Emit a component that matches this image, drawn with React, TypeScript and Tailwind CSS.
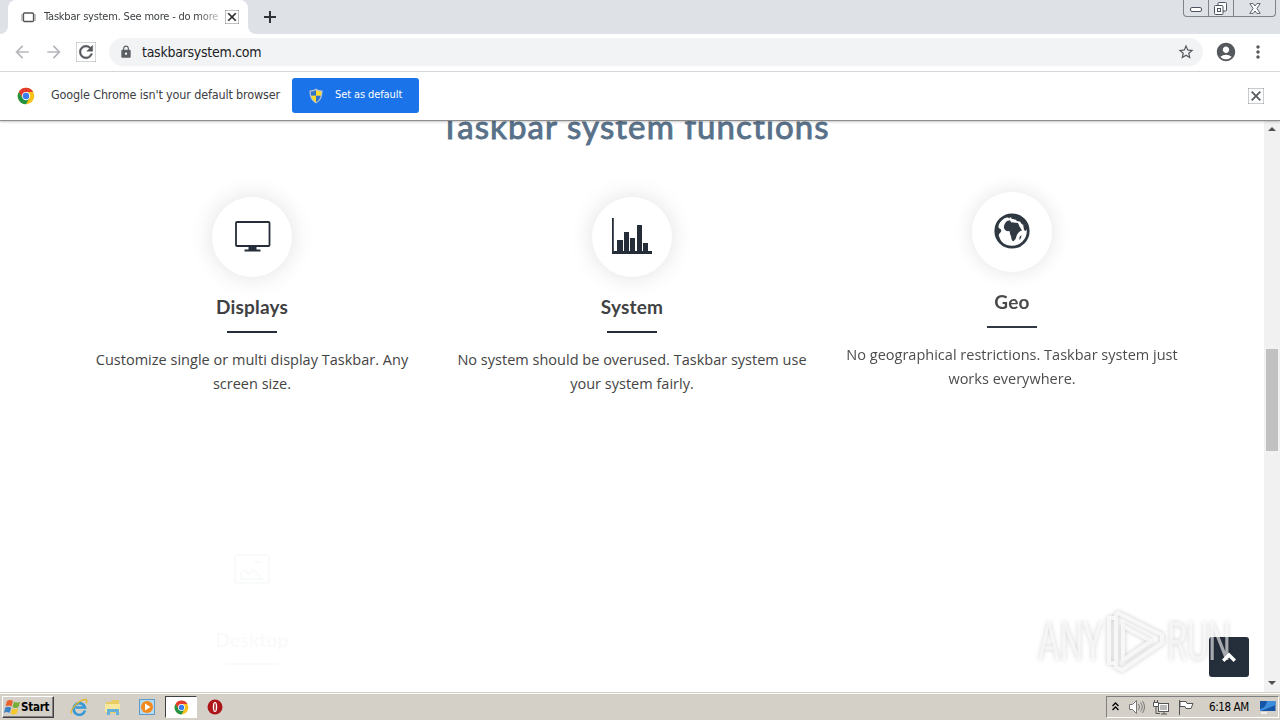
import type { ReactNode } from "react";
import {
  MdAccountCircle,
  MdArrowBack,
  MdArrowForward,
  MdClose,
  MdLock,
  MdMoreVert,
  MdRefresh,
  MdStarBorder,
} from "react-icons/md";

const tahoma = "font-['DejaVu_Sans_Condensed','DejaVu_Sans',sans-serif] [font-stretch:condensed]";

function ChromeLogo({ className }: { className: string }) {
  return (
    <svg viewBox="0 0 48 48" className={className}>
      <circle cx="24" cy="24" r="22" fill="#fbc116" />
      <path d="M24 13h19.1A22 22 0 0 0 4.9 13l9.6 16.5z" fill="#e33b2e" />
      <path d="M4.9 13A22 22 0 0 0 24 46l9.5-16.5-19 0z" fill="#229342" />
      <circle cx="24" cy="24" r="11" fill="#fff" />
      <circle cx="24" cy="24" r="8.6" fill="#3b7ded" />
    </svg>
  );
}

function Shield() {
  return (
    <svg viewBox="0 0 16 16" className="h-4 w-4">
      <path d="M8 .5C6 2 4 2.4 1.500 2.500 1.300 8.500 3 12.500 8 15.500c5-3 6.700-7 6.500-13C12 2.400 10 2 8 .5z" fill="#b9c3cf" />
      <path d="M8 2C6.500 3 5 3.500 2.800 3.600c0 1.600.1 2.900.4 4.200H8z" fill="#2d73c9" />
      <path d="M8 2c1.500 1 3 1.500 5.200 1.600 0 1.600-.1 2.900-.4 4.200H8z" fill="#fadb2b" />
      <path d="M3.200 7.800C4 10.800 5.500 12.700 8 14.200V7.800z" fill="#fadb2b" />
      <path d="M12.800 7.800c-.8 3-2.300 4.900-4.800 6.400V7.800z" fill="#2d73c9" />
    </svg>
  );
}

function TabStrip() {
  return (
    <div className="flex h-[34px] shrink-0 items-start bg-[#dee1e6] pl-2">
      <div className="relative flex h-[34px] w-60 items-center rounded-t-lg bg-white pl-[13px]">
        <svg viewBox="0 0 15 11" className="h-[11px] w-[15px]" fill="none" stroke="#555">
          <rect x="2.500" y="1" width="10" height="8.500" rx="1" strokeWidth="1.300" />
          <path d="M1 2v7M14 2v7" strokeWidth="1" stroke="#888" />
        </svg>
        <span className={`ml-2 w-[175px] overflow-hidden text-[11px] tracking-[-0.2px] whitespace-nowrap text-[#3c4043] [mask-image:linear-gradient(to_right,black_88%,transparent_104%)] ${tahoma}`}>
          Taskbar system. See more - do more
        </span>
        <MdClose className="ml-1.5 h-[14px] w-[14px] text-[#2b2d30]" stroke="currentColor" strokeWidth="1" />
        <svg viewBox="0 0 8 8" className="absolute bottom-0 -left-2 h-2 w-2" fill="#fff"><path d="M8 0v8H0a8 8 0 0 0 8-8z" /></svg>
        <svg viewBox="0 0 8 8" className="absolute -right-2 bottom-0 h-2 w-2" fill="#fff"><path d="M0 0v8h8a8 8 0 0 1-8-8z" /></svg>
      </div>
      <svg viewBox="0 0 12 12" className="mt-[11px] ml-4 h-3 w-3" stroke="#2f3237" strokeWidth="2"><path d="M6 0v12M0 6h12" /></svg>
      <div className="mr-1 ml-auto flex h-[17px] w-[93px] rounded-b border border-t-0 border-[#7f838b] text-[#4f5560]">
        <div className="flex w-[25px] items-center justify-center border-r border-[#7f838b]">
          <svg viewBox="0 0 12 5" className="mt-[3px] h-[5px] w-3"><rect x=".5" y=".5" width="11" height="4" rx="1.500" fill="#fff" stroke="currentColor" /></svg>
        </div>
        <div className="flex w-[25px] items-center justify-center border-r border-[#7f838b]">
          <svg viewBox="0 0 13 13" className="-ml-0.5 h-[13px] w-[13px]" fill="#fff" stroke="currentColor"><rect x="4" y=".5" width="8.500" height="8.500" rx="1" /><rect x=".5" y="3.500" width="8.500" height="9" rx="1" /><rect x="3.500" y="6.500" width="3" height="3" /></svg>
        </div>
        <div className="flex flex-1 items-center justify-center">
          <svg viewBox="0 0 12 11" className="h-[11px] w-3"><path d="M.8.6h3.400L6 3 7.800.6h3.400L7.900 5.500l3.300 4.900H7.800L6 8l-1.800 2.400H.8l3.300-4.900z" fill="#fff" stroke="currentColor" strokeWidth=".9" /></svg>
        </div>
      </div>
    </div>
  );
}

function Toolbar() {
  return (
    <div className="flex h-[38px] shrink-0 items-center border-b border-[#d9dbde] bg-white pb-px pl-3">
      <MdArrowBack className="h-5 w-5 text-[#b5b7ba]" />
      <MdArrowForward className="ml-3 h-5 w-5 text-[#b5b7ba]" />
      <MdRefresh className="ml-3 h-5 w-5 text-[#55585c]" stroke="currentColor" strokeWidth=".6" />
      <div className="ml-[13px] flex h-7 w-[1094px] items-center rounded-full bg-[#f1f3f4] pl-2.5">
        <MdLock className="h-[14px] w-[14px] text-[#5a5d61]" />
        <span className={`ml-[9px] text-[14px] tracking-[-0.27px] text-[#202124] ${tahoma}`}>taskbarsystem.com</span>
        <MdStarBorder className="mr-2 ml-auto h-[18px] w-[18px] text-[#55585c]" />
      </div>
      <MdAccountCircle className="ml-3 h-[22px] w-[22px] text-[#55585c]" />
      <MdMoreVert className="ml-[11px] h-5 w-5 text-[#55585c]" />
    </div>
  );
}

function InfoBar() {
  return (
    <div className={`relative z-10 flex h-[49px] shrink-0 items-center border-b border-[#8e8e8e] bg-white pb-px pl-[17px] shadow-[0_1px_2px_rgba(0,0,0,0.22)] ${tahoma}`}>
      <ChromeLogo className="h-[18px] w-[18px]" />
      <span className="ml-4 w-[229px] text-[12.5px] tracking-[-0.15px] whitespace-nowrap text-[#3c4043]">Google Chrome isn't your default browser</span>
      <div className="ml-3 flex h-[35px] w-[127px] items-center rounded-[3px] bg-[#1a73e8] pl-4 text-white">
        <Shield />
        <span className="ml-[11px] text-[11px] tracking-[-0.1px] whitespace-nowrap">Set as default</span>
      </div>
      <MdClose className="mr-4 ml-auto h-4 w-4 text-[#5f6368]" stroke="currentColor" strokeWidth="1" />
    </div>
  );
}

function MonitorIcon() {
  return (
    <svg viewBox="0 0 36 31" className="mb-0.5 ml-px h-[31px] w-9">
      <rect x="1" y="1" width="33.500" height="24" rx="1" fill="none" stroke="#252e38" strokeWidth="1.800" />
      <path d="M13.500 25h8v3.500h4V30.500H9.500v-2h4z" fill="#252e38" />
    </svg>
  );
}

function BarsIcon() {
  return (
    <svg viewBox="0 0 40 36" className="mb-0.5 h-9 w-10" fill="#252e38">
      <path d="M0 0h1.800v33H40v3H0z" />
      <path d="M5 22h6v12H5zM12 14h5v20h-5zM18 20h5v14h-5zM25 7h5v27h-5zM31 25h5v9h-5z" />
    </svg>
  );
}

function GlobeIcon() {
  return (
    <svg viewBox="0 0 36 36" className="mb-0.5 h-9 w-9">
      <circle cx="18" cy="18" r="16.200" fill="#fff" stroke="#252e38" strokeWidth="2.800" />
      <g fill="#252e38">
        <path d="M18 1c-4 0-8 1.500-10 4 2 0 4-.7 6-.5l2 1.500h3l3 2 4 .5 2 3 3 .5 1.500 5L34 18C34 8 27 1 18 1z" />
        <path d="M10 3C4 6 1 11 1 18c0 6 3 11 7 13-1-3-1.500-4-2.500-6.500s-1-3 .5-4.500 2-3.500-.5-4.500c-1.500-.5-1.500-3 0-5.500s3-4.500 6-6z" />
        <path d="M13 8l3-.8 1 2 4.500.5 2.500.3 1.500 3.500 2.500 4c-2.500.5-3 1.500-4.500 3.500s-1 3.500-2 5-2 2.500-3 2c-1.500-2-1-4-1.800-5.500s-.7-3-1.200-4.500c-2.500.5-5-.5-5.500-3S11 10 13 8z" />
        <path d="M25.500 24l1.800-2c.2 2-.5 4-1.800 5zM29 11l1 6 2 1 .5-5z" />
      </g>
      <path d="M15 5l2-.8 1 2 4 .5 1 1.500-5 .3zM25.500 10.500l2.500.8 1.500 3-2-.5z" fill="#fff" />
    </svg>
  );
}

function Feature({ title, icon, children, className = "" }: { title: string; icon: ReactNode; children: ReactNode; className?: string }) {
  return (
    <div className={`flex w-[380px] shrink-0 flex-col items-center text-center ${className}`}>
      <div className="flex h-20 w-20 items-center justify-center rounded-full bg-white shadow-[0_0_25px_rgba(0,0,0,0.12)]">{icon}</div>
      <h3 className="mt-[17px] font-[Lato,sans-serif] text-[19px] leading-[26px] font-bold tracking-[0.2px] text-[#3f4143]">{title}</h3>
      <div className="mt-[11px] h-0.5 w-[50px] bg-[#252e38]" />
      <p className="mt-[15px] font-['Open_Sans',sans-serif] text-[14.5px] leading-6 tracking-[0.01px] whitespace-nowrap text-[#444]">{children}</p>
    </div>
  );
}

function Watermark() {
  return (
    <svg viewBox="0 0 200 70" className="pointer-events-none absolute top-[485px] left-[1036px] h-[70px] w-[200px] drop-shadow-[0_0_2px_rgba(0,0,0,0.28)]">
      <g fill="#fff" fillOpacity=".6" fontFamily="Roboto, sans-serif" fontSize="54" fontWeight="400">
        <text x="2" y="54" textLength="65" lengthAdjust="spacingAndGlyphs">ANY</text>
        <text x="131" y="54" textLength="64" lengthAdjust="spacingAndGlyphs">RUN</text>
      </g>
      <g fill="none" stroke="#fff" strokeOpacity=".75" strokeWidth="4" strokeLinejoin="round">
        <path d="M82 7l44 22v8L86 64l-6-3V9z" />
        <path d="M87 20v34l28-19z" />
        <path d="M79 12h-6v45h6" />
      </g>
    </svg>
  );
}

function PageContent() {
  return (
    <div className="relative flex h-[571px] shrink-0 overflow-hidden bg-white">
      <div className="flex w-[1264px] flex-col items-center">
        <h2 className="-mt-[15px] ml-[6px] h-10 font-[Lato,sans-serif] text-[33px] leading-10 font-normal tracking-[1.1px] whitespace-nowrap text-[#587189] [-webkit-text-stroke:0.9px_#587189]">
          Taskbar system functions
        </h2>
        <div className="mt-[51px] flex w-[1140px] items-start">
          <Feature title="Displays" icon={<MonitorIcon />}>
            Customize single or multi display Taskbar. Any<br />screen size.
          </Feature>
          <Feature title="System" icon={<BarsIcon />}>
            No system should be overused. Taskbar system use<br />your system fairly.
          </Feature>
          <Feature title="Geo" icon={<GlobeIcon />} className="-mt-[5px] opacity-95">
            No geographical restrictions. Taskbar system just<br />works everywhere.
          </Feature>
        </div>
        <div className="mt-[158px] flex w-[1140px] opacity-[0.02]">
          <div className="flex w-[380px] flex-col items-center">
            <svg viewBox="0 0 36 30" className="h-[30px] w-9" fill="none" stroke="#252e38" strokeWidth="2">
              <rect x="1" y="1" width="34" height="28" rx="2" />
              <path d="M7 25v-6l4-3 4 4 4-4 4 3 5 6zM20 8h6" />
            </svg>
            <h3 className="mt-[43px] font-[Lato,sans-serif] text-[19px] leading-[26px] font-bold tracking-[0.2px]">Desktop</h3>
            <div className="mt-[10px] h-0.5 w-[50px] bg-[#252e38]" />
          </div>
        </div>
      </div>
      <div className="flex w-4 flex-col items-center bg-[#f1f1f1]">
        <svg viewBox="0 0 8 4" className="mt-[6px] h-1 w-2" fill="#505050"><path d="M0 4l4-4 4 4z" /></svg>
        <div className="mt-[218px] h-[102px] w-3 bg-[#c1c1c1]" />
        <svg viewBox="0 0 8 4" className="mt-auto mb-[7px] h-1 w-2" fill="#505050"><path d="M0 0l4 4 4-4z" /></svg>
      </div>
      <div className="absolute top-[516px] left-[1209px] h-10 w-10 rounded-[3px] bg-[#252e3b]" />
      <Watermark />
      <svg viewBox="0 0 14 10" className="absolute top-[531px] left-[1222px] h-[10px] w-[14px]" fill="none" stroke="#fff" strokeWidth="3.400"><path d="M1.200 8.700L7 3l5.800 5.700" /></svg>
    </div>
  );
}

function Taskbar() {
  return (
    <div className={`flex h-7 shrink-0 items-center border-t border-[#d4d0c8] bg-[#d4d0c8] pt-px text-black shadow-[inset_0_1px_0_#fff] ${tahoma}`}>
      <div className="ml-0.5 flex h-[22px] w-[52px] items-center border border-t-white border-r-[#404040] border-b-[#404040] border-l-white pl-px shadow-[inset_-1px_-1px_0_#808080]">
        <svg viewBox="0 0 17 16" className="h-4 w-[17px] shrink-0">
          <path d="M3 2c2-1.500 4-1.300 6 0L7.500 7.500c-2-1.200-4-1.200-6 0z" fill="#e8602c" />
          <path d="M10 2.700c2 1.200 4 1.200 6 0L14.500 8c-2 1.300-4 1.200-6 0z" fill="#76ad35" />
          <path d="M1.200 8.700c2-1.300 4-1.200 6 0L5.700 14c-2-1.200-4-1.200-5.700 0z" fill="#3b83c5" />
          <path d="M8.200 9.300c2 1.200 4 1.200 6 0l-1.500 5.200c-2 1.300-4 1.200-6 0z" fill="#f6c62d" />
        </svg>
        <span className="mt-0.5 text-[11.500px] font-bold tracking-[-0.25px]">Start</span>
      </div>
      <svg viewBox="0 0 18 18" className="ml-4 h-[18px] w-[18px]" fill="none">
        <path d="M15 12.500A5.800 5.800 0 1 1 15 9.500H5.500" stroke="#3699d6" strokeWidth="2.600" />
        <path d="M1.500 15.500C-.5 12 9 2 15 1.500c3 0 2 2 1 4" stroke="#e8b72f" strokeWidth="1.300" />
      </svg>
      <svg viewBox="0 0 18 18" className="ml-4 h-[18px] w-[18px]">
        <path d="M2 4h5l1-2h7v13H2z" fill="#e8cc62" />
        <path d="M1 6h15v8H1z" fill="#f8e89d" />
        <path d="M3 17v-6h12v6h-3v-3H6v3z" fill="#64b2dc" />
      </svg>
      <svg viewBox="0 0 16 16" className="ml-[17px] h-4 w-4">
        <rect x=".5" y=".5" width="15" height="15" fill="#b8d8ee" stroke="#5b9bcb" />
        <circle cx="8" cy="8" r="6" fill="#f18a1c" /><path d="M6 4.500v7L11.500 8z" fill="#fff" />
      </svg>
      <div className="ml-[10px] flex h-[22px] w-8 items-center justify-center border border-t-[#404040] border-r-white border-b-white border-l-[#404040] bg-white">
        <ChromeLogo className="h-[15px] w-[15px]" />
      </div>
      <svg viewBox="0 0 16 16" className="ml-2.5 h-4 w-4"><circle cx="8" cy="8" r="7.500" fill="#ad1518" /><ellipse cx="8" cy="8" rx="2.200" ry="5" fill="#fff" /><ellipse cx="8" cy="8" rx=".8" ry="4" fill="#ad1518" /></svg>
      <div className="mr-px ml-auto flex h-[22px] w-[173px] items-center border border-t-[#808080] border-r-white border-b-white border-l-[#808080] pl-[5px]">
        <svg viewBox="0 0 7 9" className="mb-0.5 h-[9px] w-[7px]" fill="none" stroke="#000" strokeWidth="1.300"><path d="M.5 4l3-3 3 3M.5 8l3-3 3 3" /></svg>
        <svg viewBox="0 0 16 14" className="ml-[10px] h-[14px] w-4" fill="#fff" stroke="#777"><path d="M.5 4.500h3l4-4v13l-4-4h-3z" /><path d="M9.500 4q2 3 0 6M11.500 2.500q3.500 4.500 0 9M13.500 1q4 6 0 12" fill="none" /></svg>
        <svg viewBox="0 0 16 15" className="ml-2 h-[15px] w-4" fill="#fff" stroke="#555"><rect x="5.500" y="3.500" width="10" height="8" /><path d="M7 5h7v5H7z" fill="#b9b9b9" stroke="none" /><path d="M8 14h6M11 12v2M.5 2.500h5v4h-5zM1.500 0v2M4.500 0v2" /><path d="M3 7v6.500h4" fill="none" /></svg>
        <svg viewBox="0 0 16 15" className="ml-[9px] h-[15px] w-4" fill="#fff" stroke="#555"><path d="M1.500 0v15M2 1.500h6l1 2h6l-2 5H8l-1-2H2z" /></svg>
        <span className="mt-0.5 ml-[15px] w-[43px] text-[11.500px] tracking-[-0.4px] whitespace-nowrap">6:18 AM</span>
        <svg viewBox="0 0 16 13" className="ml-[8px] h-[13px] w-4"><path d="M0 0h15.500v10H0z" fill="#1555a5" /><path d="M7 0h8.500v4L1 10H0V8C5 7 6 4 7 0z" fill="#3d8ddd" /><path d="M1 11h6v2H1z" fill="#eee" /></svg>
      </div>
    </div>
  );
}

export default function App() {
  return (
    <div className="flex h-[720px] w-[1280px] flex-col overflow-hidden bg-white">
      <TabStrip />
      <Toolbar />
      <InfoBar />
      <PageContent />
      <Taskbar />
    </div>
  );
}
